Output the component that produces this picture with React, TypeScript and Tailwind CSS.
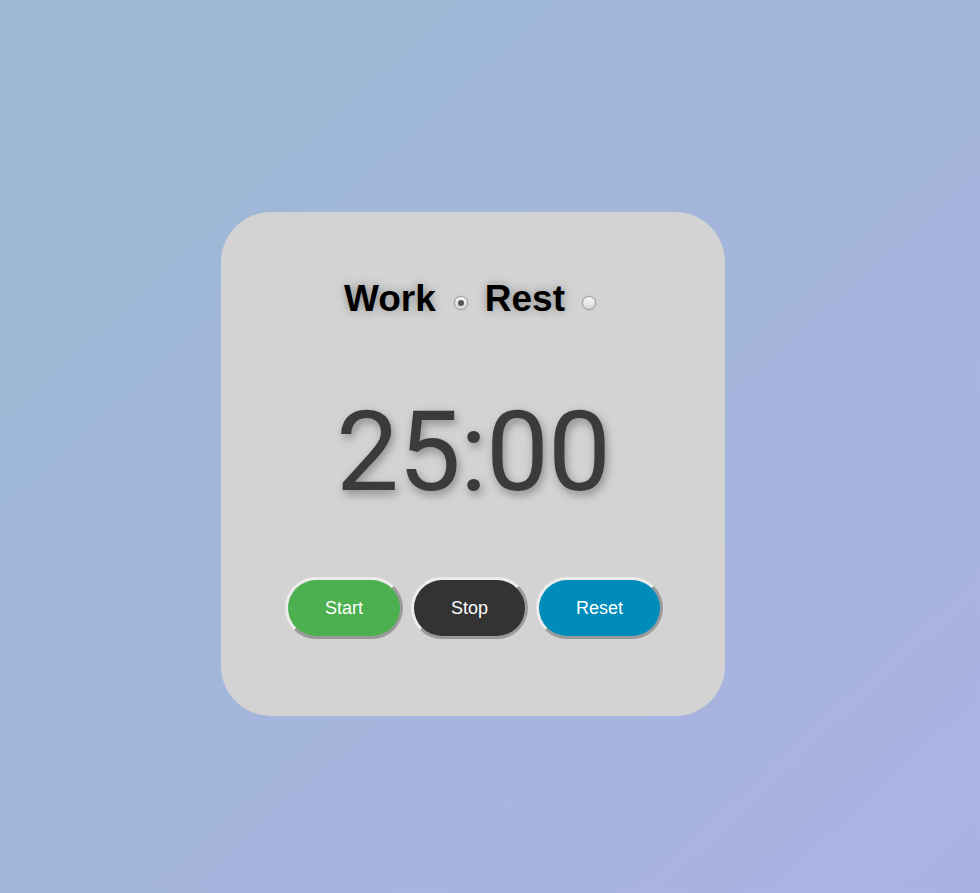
import { useState } from "react";

function Radio({ checked, onClick }: { checked: boolean; onClick: () => void }) {
  return (
    <span
      onClick={onClick}
      className="inline-flex w-[14px] h-[14px] items-center justify-center rounded-full border border-[#9a9a9a] bg-[linear-gradient(#fafafa,#d6d6d6)] shadow-[0_0_2px_rgba(0,0,0,0.15)] cursor-pointer"
    >
      {checked && <span className="w-[6px] h-[6px] rounded-full bg-[#555]" />}
    </span>
  );
}

export default function App() {
  const [mode, setMode] = useState<"work" | "rest">("work");
  const time = mode === "work" ? "25:00" : "05:00";

  const buttons = [
    { label: "Start", bg: "bg-[#4caf50]" },
    { label: "Stop", bg: "bg-[#333333]" },
    { label: "Reset", bg: "bg-[#008cba]" },
  ];

  return (
    <div className="min-h-screen w-full bg-[linear-gradient(to_bottom_right,#9cbad3,#abb2e3)] pl-[221px] pt-[212px] font-['Liberation_Sans',Arial,sans-serif]">
      <div className="w-[504px] h-[504px] rounded-[50px] bg-[#d3d3d3] flex flex-col items-center pt-[66px]">
        {/* mode switch */}
        <div className="flex items-center h-[42px] text-[37px] font-bold text-black [text-shadow:0_0_10px_rgba(0,0,0,0.35)] pr-[6px]">
          <span>Work</span>
          <span className="ml-[18px] mr-[17px] mt-[8px] flex">
            <Radio checked={mode === "work"} onClick={() => setMode("work")} />
          </span>
          <span>Rest</span>
          <span className="ml-[17px] mt-[8px] flex">
            <Radio checked={mode === "rest"} onClick={() => setMode("rest")} />
          </span>
        </div>

        {/* timer */}
        <div className="mt-[76px] h-[112px] leading-none text-[112px] text-[#3b3b3d] font-['Roboto',sans-serif] [text-shadow:2px_4px_10px_rgba(0,0,0,0.35)] tracking-[-1px]">
          {time}
        </div>

        {/* controls */}
        <div className="mt-[69px] flex gap-[8px] pl-[2px]">
          {buttons.map((b) => (
            <button
              key={b.label}
              className={`${b.bg} h-[62px] px-[37px] rounded-full border-[3px] border-t-[#ececec] border-l-[#ececec] border-r-[#9a9a9a] border-b-[#9a9a9a] text-white text-[18px] leading-none`}
            >
              {b.label}
            </button>
          ))}
        </div>
      </div>
    </div>
  );
}
